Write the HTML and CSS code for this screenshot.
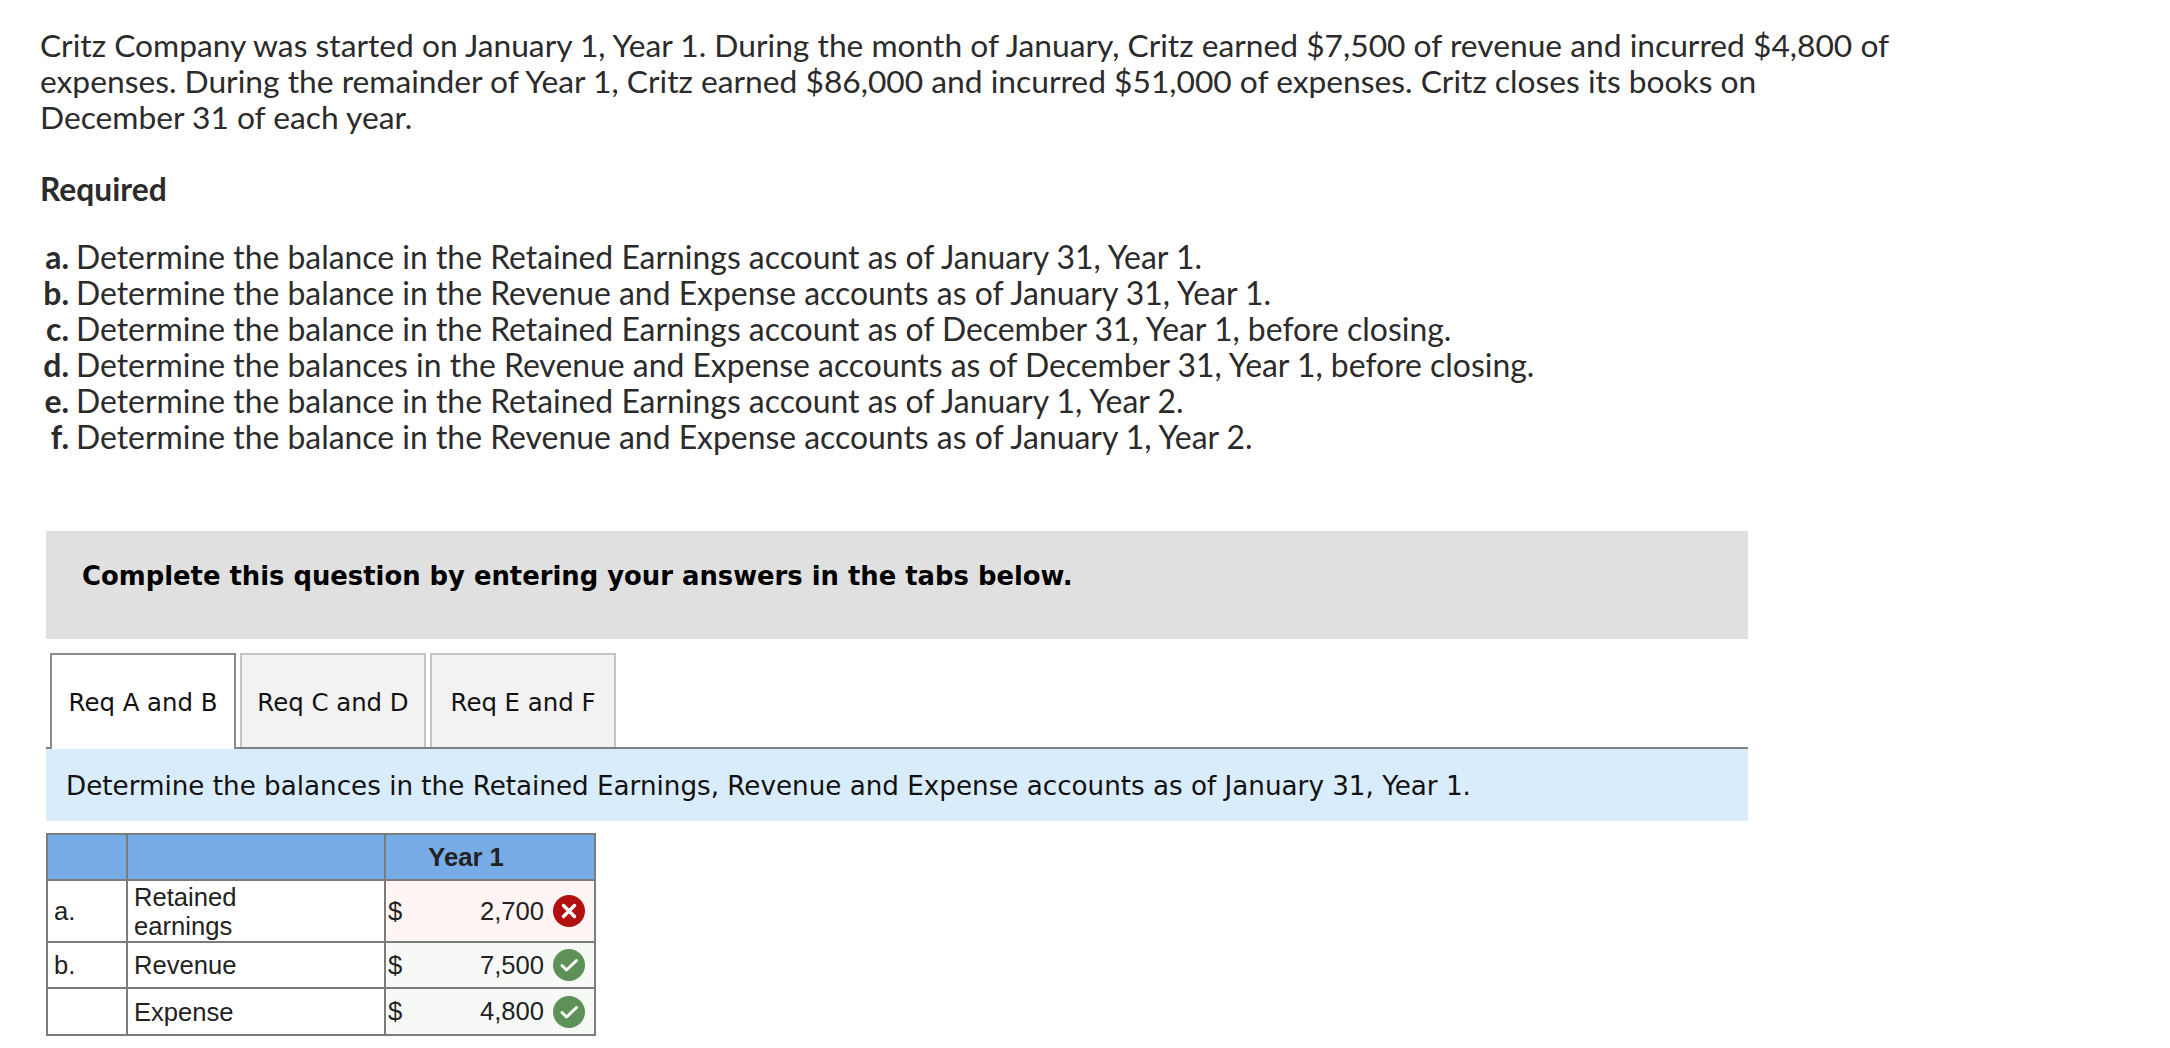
FILE: index.html
```html
<!DOCTYPE html>
<html lang="en">
<head>
  <meta charset="UTF-8">
  <title>Critz Company</title>
  <link rel="stylesheet" href="styles.css">
</head>
<body>
  <p class="intro">Critz Company was started on January 1, Year 1. During the month of January, Critz earned $7,500 of revenue and incurred $4,800 of expenses. During the remainder of Year 1, Critz earned $86,000 and incurred $51,000 of expenses. Critz closes its books on December 31 of each year.</p>

  <h2 class="required">Required</h2>

  <ul class="parts">
    <li><b>a.</b><span>Determine the balance in the Retained Earnings account as of January 31, Year 1.</span></li>
    <li><b>b.</b><span>Determine the balance in the Revenue and Expense accounts as of January 31, Year 1.</span></li>
    <li><b>c.</b><span>Determine the balance in the Retained Earnings account as of December 31, Year 1, before closing.</span></li>
    <li><b>d.</b><span>Determine the balances in the Revenue and Expense accounts as of December 31, Year 1, before closing.</span></li>
    <li><b>e.</b><span>Determine the balance in the Retained Earnings account as of January 1, Year 2.</span></li>
    <li><b>f.</b><span>Determine the balance in the Revenue and Expense accounts as of January 1, Year 2.</span></li>
  </ul>

  <div class="question">
    <div class="banner">Complete this question by entering your answers in the tabs below.</div>

    <div class="tabs">
      <div class="tab active">Req A and B</div>
      <div class="tab">Req C and D</div>
      <div class="tab">Req E and F</div>
    </div>

    <div class="task">Determine the balances in the Retained Earnings, Revenue and Expense accounts as of January 31, Year 1.</div>

    <table class="answers">
      <tr class="head">
        <th class="col-key"></th>
        <th class="col-name"></th>
        <th class="col-year">Year 1</th>
      </tr>
      <tr class="tall">
        <td>a.</td>
        <td>Retained<br>earnings</td>
        <td class="cell wrong">
          <div class="amount">
            <span>$</span><span class="num">2,700</span>
            <svg class="mark" viewBox="0 0 32 32"><circle cx="16" cy="16" r="16" fill="#b01010"/><path d="M10.5 10.5l11 11M21.5 10.5l-11 11" stroke="#fff" stroke-width="3.4" stroke-linecap="round" fill="none"/></svg>
          </div>
        </td>
      </tr>
      <tr>
        <td>b.</td>
        <td>Revenue</td>
        <td class="cell right">
          <div class="amount">
            <span>$</span><span class="num">7,500</span>
            <svg class="mark" viewBox="0 0 32 32"><circle cx="16" cy="16" r="16" fill="#5e9157"/><path d="M9 16.5l4.5 4.5L23.5 11.5" stroke="#fff" stroke-width="3" stroke-linecap="round" stroke-linejoin="round" fill="none"/></svg>
          </div>
        </td>
      </tr>
      <tr class="last">
        <td></td>
        <td>Expense</td>
        <td class="cell right">
          <div class="amount">
            <span>$</span><span class="num">4,800</span>
            <svg class="mark" viewBox="0 0 32 32"><circle cx="16" cy="16" r="16" fill="#5e9157"/><path d="M9 16.5l4.5 4.5L23.5 11.5" stroke="#fff" stroke-width="3" stroke-linecap="round" stroke-linejoin="round" fill="none"/></svg>
          </div>
        </td>
      </tr>
    </table>
  </div>
</body>
</html>
```

FILE: styles.css
```css
body {
  margin: 0;
  padding: 27px 0 0 40px;
  background-color: #ffffff;
  color: #2b2b2b;
  font-family: "Lato", sans-serif;
  font-size: 31.75px;
  line-height: 36px;
}

.intro {
  margin: 0;
  max-width: 1860px;
}

.required {
  margin: 36px 0 0;
  font-size: 31.75px;
  line-height: 36px;
  font-weight: 700;
}

.parts {
  margin: 32px 0 0;
  padding: 0;
  list-style: none;
  font-size: 31.9px;
}

.parts li {
  display: flex;
  gap: 7px;
}

.parts b {
  width: 29px;
  text-align: right;
  white-space: nowrap;
}

.question {
  margin: 76px 0 0 6px;
  width: 1702px;
}

.banner {
  height: 108px;
  padding: 28px 36px 0;
  box-sizing: border-box;
  background-color: #e0e0e0;
  color: #000000;
  font-family: "DejaVu Sans", sans-serif;
  font-weight: 700;
  font-size: 25.85px;
  line-height: 34px;
}

.tabs {
  display: flex;
  gap: 4px;
  margin-top: 14px;
  padding-left: 4px;
  height: 94px;
  border-bottom: 2px solid #808080;
}

.tab {
  width: 186px;
  height: 94px;
  box-sizing: border-box;
  padding-top: 3px;
  display: flex;
  align-items: center;
  justify-content: center;
  background-color: #f2f2f2;
  border: 2px solid #c4c4c4;
  border-bottom: none;
  color: #111111;
  font-family: "DejaVu Sans", sans-serif;
  font-size: 24.4px;
}

.tab.active {
  height: 96px;
  padding-bottom: 2px;
  background-color: #ffffff;
  border-color: #8a8a8a;
}

.task {
  height: 72px;
  box-sizing: border-box;
  padding: 2px 0 0 20px;
  display: flex;
  align-items: center;
  background-color: #d9ecfb;
  color: #111111;
  font-family: "DejaVu Sans", sans-serif;
  font-size: 26.2px;
}

.answers {
  margin-top: 12px;
  width: 550px;
  table-layout: fixed;
  border-collapse: collapse;
  font-family: "Liberation Sans", Arial, sans-serif;
  font-size: 25.6px;
  line-height: 29px;
  color: #222222;
}

.answers th, .answers td {
  box-sizing: border-box;
  border: 2px solid #7c7c7c;
  padding: 1px 6px 0;
  height: 46px;
}

.answers .head th {
  background-color: #78ace6;
  height: 46px;
  font-weight: 700;
}

.answers .tall td {
  height: 62px;
}

.answers .last td {
  height: 47px;
}

.col-key { width: 80px; }
.col-name { width: 258px; }

.answers th.col-year {
  padding-right: 54px;
}

.answers td.cell {
  padding: 0 9px 0 2px;
}

.wrong { background-color: #fff5f4; }
.right { background-color: #f6f9f6; }

.amount {
  display: flex;
  align-items: center;
}

.num {
  margin-left: auto;
  margin-right: 9px;
}

.mark {
  width: 32px;
  height: 32px;
  flex: none;
}
```
